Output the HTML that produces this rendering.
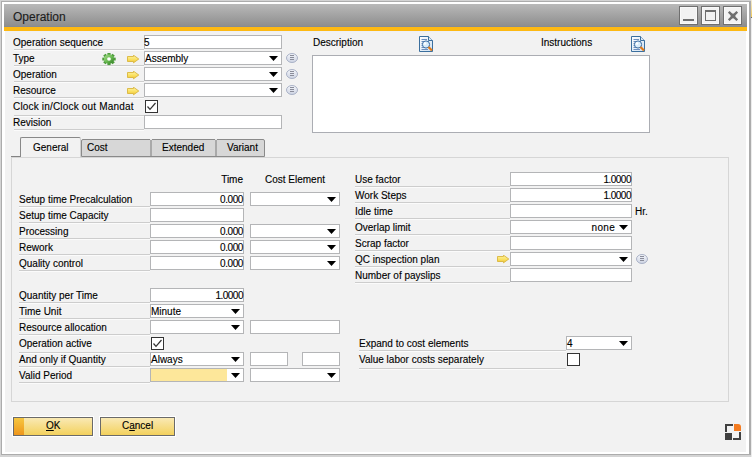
<!DOCTYPE html><html><head><meta charset="utf-8"><style>
html,body{margin:0;padding:0;width:752px;height:457px;overflow:hidden;background:#d4d4d4;}
body{position:relative;font-family:"Liberation Sans", sans-serif;}
.t{position:absolute;white-space:nowrap;line-height:12px;font-family:"Liberation Sans", sans-serif;-webkit-text-stroke:0.12px currentColor;}
</style></head><body>
<div style="position:absolute;left:1px;top:1px;width:750px;height:454px;background:#acacac"></div>
<div style="position:absolute;left:2px;top:2px;width:747px;height:452px;background:#ffffff"></div>
<div style="position:absolute;left:751px;top:0px;width:1px;height:17px;background:linear-gradient(#f4ecd6,#efc95a)"></div>
<div style="position:absolute;left:751px;top:17px;width:1px;height:1px;background:#6a6a6a"></div>
<div style="position:absolute;left:751px;top:18px;width:1px;height:439px;background:#ececec"></div>
<div style="position:absolute;left:4px;top:4px;width:743px;height:23px;background:linear-gradient(#b9b9b9,#8c8c8c)"></div>
<div style="position:absolute;left:4px;top:26px;width:743px;height:1px;background:#878b92"></div>
<div style="position:absolute;left:4px;top:27px;width:743px;height:4px;background:#fdb913"></div>
<div style="position:absolute;left:5px;top:31px;width:741px;height:421px;background:#f2f2f2"></div>
<div style="position:absolute;left:5px;top:31px;width:741px;height:1px;background:#eef0f6"></div>
<div class="t" style="left:13px;top:11px;font-size:12px;color:#1c1c1c;">Operation</div>
<div style="position:absolute;left:679px;top:6px;width:19px;height:19px;box-sizing:border-box;border:1px solid #6f6f6f;background:#f2f2f2;box-shadow:inset 0 0 0 1px #f9f9f9"></div>
<div style="position:absolute;left:701px;top:6px;width:19px;height:19px;box-sizing:border-box;border:1px solid #6f6f6f;background:#f2f2f2;box-shadow:inset 0 0 0 1px #f9f9f9"></div>
<div style="position:absolute;left:723px;top:6px;width:19px;height:19px;box-sizing:border-box;border:1px solid #6f6f6f;background:#f2f2f2;box-shadow:inset 0 0 0 1px #f9f9f9"></div>
<div style="position:absolute;left:683px;top:19px;width:11px;height:2px;background:#6f6f6f"></div>
<div style="position:absolute;left:705px;top:10px;width:11px;height:11px;box-sizing:border-box;border:1px solid #6f6f6f;border-top-width:2px"></div>
<svg style="position:absolute;left:728px;top:11px" width="10" height="10"><path d="M0.8 0.8L9.2 9.2M9.2 0.8L0.8 9.2" stroke="#6f6f6f" stroke-width="2.3"/><rect x="2.7" y="2.7" width="4.6" height="4.6" fill="#6f6f6f"/></svg>
<div class="t" style="left:13px;top:37px;font-size:10px;color:#000;">Operation sequence</div>
<div style="position:absolute;left:14px;top:49px;width:130px;height:1px;background:#cdcdcd"></div>
<div style="position:absolute;left:14px;top:50px;width:130px;height:1px;background:#fbfbfb"></div>
<div style="position:absolute;left:144px;top:35px;width:138px;height:14px;box-sizing:border-box;border:1px solid #b4b5b7;background:#fff"></div>
<div class="t" style="left:144px;top:37px;font-size:10px;color:#000;">5</div>
<div class="t" style="left:13px;top:53px;font-size:10px;color:#000;">Type</div>
<div style="position:absolute;left:14px;top:65px;width:130px;height:1px;background:#cdcdcd"></div>
<div style="position:absolute;left:14px;top:66px;width:130px;height:1px;background:#fbfbfb"></div>
<svg style="position:absolute;left:102px;top:53px" width="14" height="13"><defs><linearGradient id="gg" x1="0" y1="0" x2="1" y2="1"><stop offset="0" stop-color="#a6dc8a"/><stop offset="0.5" stop-color="#6cbc54"/><stop offset="1" stop-color="#2e7a22"/></linearGradient></defs><g transform="translate(0 0.2) scale(1 0.9)"><rect x="5.4" y="-0.2" width="3.2" height="3.2" fill="#4c9c3a" transform="rotate(0 7 6.5)"/><rect x="5.4" y="-0.2" width="3.2" height="3.2" fill="#4c9c3a" transform="rotate(45 7 6.5)"/><rect x="5.4" y="-0.2" width="3.2" height="3.2" fill="#4c9c3a" transform="rotate(90 7 6.5)"/><rect x="5.4" y="-0.2" width="3.2" height="3.2" fill="#4c9c3a" transform="rotate(135 7 6.5)"/><rect x="5.4" y="-0.2" width="3.2" height="3.2" fill="#4c9c3a" transform="rotate(180 7 6.5)"/><rect x="5.4" y="-0.2" width="3.2" height="3.2" fill="#4c9c3a" transform="rotate(225 7 6.5)"/><rect x="5.4" y="-0.2" width="3.2" height="3.2" fill="#4c9c3a" transform="rotate(270 7 6.5)"/><rect x="5.4" y="-0.2" width="3.2" height="3.2" fill="#4c9c3a" transform="rotate(315 7 6.5)"/><circle cx="7" cy="6.5" r="5.1" fill="url(#gg)"/><circle cx="7" cy="6.5" r="1.9" fill="#fff"/></g></svg>
<svg style="position:absolute;left:127px;top:55px" width="13" height="9"><defs><linearGradient id="ag12755" x1="0" y1="0" x2="0" y2="1"><stop offset="0" stop-color="#fff5a6"/><stop offset="0.6" stop-color="#f9de5c"/><stop offset="1" stop-color="#efc232"/></linearGradient></defs><path d="M0.5 1.5H6.5V0.2L11.8 4L6.5 7.8V6.5H0.5Z" fill="url(#ag12755)" stroke="#d9b63c" stroke-width="0.9"/></svg>
<div style="position:absolute;left:144px;top:51px;width:138px;height:14px;box-sizing:border-box;border:1px solid #b4b5b7;background:#fff"></div>
<svg style="position:absolute;left:269px;top:56px" width="9" height="5"><path d="M0 0H9L4.5 5Z" fill="#000"/></svg>
<div class="t" style="left:145px;top:53px;font-size:10px;color:#000;">Assembly</div>
<svg style="position:absolute;left:286px;top:53px" width="12" height="10"><defs><linearGradient id="lg28653" x1="0" y1="0" x2="0" y2="1"><stop offset="0" stop-color="#f4f6fb"/><stop offset="1" stop-color="#cdd3e2"/></linearGradient></defs><ellipse cx="6" cy="5" rx="5.5" ry="4.5" fill="url(#lg28653)" stroke="#aab2c6" stroke-width="1"/><path d="M4 2.5H8M4 4.5H8M4 6.5H8" stroke="#8a8d9a" stroke-width="1"/></svg>
<div class="t" style="left:13px;top:69px;font-size:10px;color:#000;">Operation</div>
<div style="position:absolute;left:14px;top:81px;width:130px;height:1px;background:#cdcdcd"></div>
<div style="position:absolute;left:14px;top:82px;width:130px;height:1px;background:#fbfbfb"></div>
<svg style="position:absolute;left:127px;top:71px" width="13" height="9"><defs><linearGradient id="ag12771" x1="0" y1="0" x2="0" y2="1"><stop offset="0" stop-color="#fff5a6"/><stop offset="0.6" stop-color="#f9de5c"/><stop offset="1" stop-color="#efc232"/></linearGradient></defs><path d="M0.5 1.5H6.5V0.2L11.8 4L6.5 7.8V6.5H0.5Z" fill="url(#ag12771)" stroke="#d9b63c" stroke-width="0.9"/></svg>
<div style="position:absolute;left:144px;top:67px;width:138px;height:14px;box-sizing:border-box;border:1px solid #b4b5b7;background:#fff"></div>
<svg style="position:absolute;left:269px;top:72px" width="9" height="5"><path d="M0 0H9L4.5 5Z" fill="#000"/></svg>
<svg style="position:absolute;left:286px;top:69px" width="12" height="10"><defs><linearGradient id="lg28669" x1="0" y1="0" x2="0" y2="1"><stop offset="0" stop-color="#f4f6fb"/><stop offset="1" stop-color="#cdd3e2"/></linearGradient></defs><ellipse cx="6" cy="5" rx="5.5" ry="4.5" fill="url(#lg28669)" stroke="#aab2c6" stroke-width="1"/><path d="M4 2.5H8M4 4.5H8M4 6.5H8" stroke="#8a8d9a" stroke-width="1"/></svg>
<div class="t" style="left:13px;top:85px;font-size:10px;color:#000;">Resource</div>
<div style="position:absolute;left:14px;top:97px;width:130px;height:1px;background:#cdcdcd"></div>
<div style="position:absolute;left:14px;top:98px;width:130px;height:1px;background:#fbfbfb"></div>
<svg style="position:absolute;left:127px;top:87px" width="13" height="9"><defs><linearGradient id="ag12787" x1="0" y1="0" x2="0" y2="1"><stop offset="0" stop-color="#fff5a6"/><stop offset="0.6" stop-color="#f9de5c"/><stop offset="1" stop-color="#efc232"/></linearGradient></defs><path d="M0.5 1.5H6.5V0.2L11.8 4L6.5 7.8V6.5H0.5Z" fill="url(#ag12787)" stroke="#d9b63c" stroke-width="0.9"/></svg>
<div style="position:absolute;left:144px;top:83px;width:138px;height:14px;box-sizing:border-box;border:1px solid #b4b5b7;background:#fff"></div>
<svg style="position:absolute;left:269px;top:88px" width="9" height="5"><path d="M0 0H9L4.5 5Z" fill="#000"/></svg>
<svg style="position:absolute;left:286px;top:85px" width="12" height="10"><defs><linearGradient id="lg28685" x1="0" y1="0" x2="0" y2="1"><stop offset="0" stop-color="#f4f6fb"/><stop offset="1" stop-color="#cdd3e2"/></linearGradient></defs><ellipse cx="6" cy="5" rx="5.5" ry="4.5" fill="url(#lg28685)" stroke="#aab2c6" stroke-width="1"/><path d="M4 2.5H8M4 4.5H8M4 6.5H8" stroke="#8a8d9a" stroke-width="1"/></svg>
<div class="t" style="left:13px;top:101px;font-size:10px;color:#000;"><span style="display:inline-block;width:121px;overflow:hidden;letter-spacing:0.18px;vertical-align:top">Clock in/Clock out Mandat</span></div>
<div style="position:absolute;left:14px;top:115px;width:130px;height:1px;background:#cdcdcd"></div>
<div style="position:absolute;left:14px;top:116px;width:130px;height:1px;background:#fbfbfb"></div>
<div style="position:absolute;left:145px;top:100px;width:13px;height:13px;box-sizing:border-box;border:1px solid #333;background:#fff"></div>
<svg style="position:absolute;left:145px;top:100px" width="13" height="13"><path d="M2.5 6.5L5 9.3L10.5 3" fill="none" stroke="#333" stroke-width="1.25"/></svg>
<div class="t" style="left:13px;top:117px;font-size:10px;color:#000;">Revision</div>
<div style="position:absolute;left:14px;top:129px;width:130px;height:1px;background:#cdcdcd"></div>
<div style="position:absolute;left:14px;top:130px;width:130px;height:1px;background:#fbfbfb"></div>
<div style="position:absolute;left:144px;top:115px;width:138px;height:14px;box-sizing:border-box;border:1px solid #b4b5b7;background:#fff"></div>
<div class="t" style="left:313px;top:37px;font-size:10px;color:#000;">Description</div>
<svg style="position:absolute;left:419px;top:36px" width="15" height="17">
<defs><linearGradient id="dg419" x1="0" y1="0" x2="1" y2="1"><stop offset="0" stop-color="#ffffff"/><stop offset="1" stop-color="#cfe0f0"/></linearGradient></defs>
<path d="M0.5 0.5H9.5L13.5 4.5V15.5H0.5Z" fill="url(#dg419)" stroke="#3b6f9e" stroke-width="1"/>
<path d="M9.5 0.5V4.5H13.5" fill="#dbe8f4" stroke="#3b6f9e" stroke-width="1"/>
<path d="M2.5 3.5H8M2.5 5.5H10M2.5 7.5H11M2.5 9.5H11M2.5 11.5H11M2.5 13.5H9" stroke="#6d8fbf" stroke-width="1"/>
<circle cx="7" cy="8.5" r="3.6" fill="#d8ecfa" stroke="#3f6fa3" stroke-width="1"/>
<circle cx="6" cy="7.5" r="1.2" fill="#fff"/>
<path d="M9.5 11L13 14.5" stroke="#e07a18" stroke-width="2.2"/>
</svg>
<div class="t" style="left:541px;top:37px;font-size:10px;color:#000;">Instructions</div>
<svg style="position:absolute;left:631px;top:36px" width="15" height="17">
<defs><linearGradient id="dg631" x1="0" y1="0" x2="1" y2="1"><stop offset="0" stop-color="#ffffff"/><stop offset="1" stop-color="#cfe0f0"/></linearGradient></defs>
<path d="M0.5 0.5H9.5L13.5 4.5V15.5H0.5Z" fill="url(#dg631)" stroke="#3b6f9e" stroke-width="1"/>
<path d="M9.5 0.5V4.5H13.5" fill="#dbe8f4" stroke="#3b6f9e" stroke-width="1"/>
<path d="M2.5 3.5H8M2.5 5.5H10M2.5 7.5H11M2.5 9.5H11M2.5 11.5H11M2.5 13.5H9" stroke="#6d8fbf" stroke-width="1"/>
<circle cx="7" cy="8.5" r="3.6" fill="#d8ecfa" stroke="#3f6fa3" stroke-width="1"/>
<circle cx="6" cy="7.5" r="1.2" fill="#fff"/>
<path d="M9.5 11L13 14.5" stroke="#e07a18" stroke-width="2.2"/>
</svg>
<div style="position:absolute;left:312px;top:55px;width:338px;height:78px;box-sizing:border-box;border:1px solid #abadb3;background:#fff"></div>
<div style="position:absolute;left:11px;top:157px;width:718px;height:245px;box-sizing:border-box;border:1px solid #d6d6d6"></div>
<div style="position:absolute;left:11px;top:156px;width:10px;height:1px;background:#838383"></div>
<div style="position:absolute;left:81px;top:139px;width:184px;height:18px;box-sizing:border-box;border:1px solid #8a8a8a;border-radius:2px 2px 0 0;background:#d7d7d7"></div>
<div style="position:absolute;left:150px;top:140px;width:2px;height:16px;background:#a9a9a9"></div>
<div style="position:absolute;left:215px;top:140px;width:2px;height:16px;background:#a9a9a9"></div>
<div style="position:absolute;left:150px;top:139px;width:2px;height:1px;background:#e6e6e6"></div>
<div style="position:absolute;left:215px;top:139px;width:2px;height:1px;background:#e6e6e6"></div>
<div class="t" style="left:87px;top:142px;font-size:10px;color:#000;">Cost</div>
<div class="t" style="left:162px;top:142px;font-size:10px;color:#000;">Extended</div>
<div class="t" style="left:227px;top:142px;font-size:10px;color:#000;">Variant</div>
<div style="position:absolute;left:20px;top:137px;width:61px;height:20px;box-sizing:border-box;border:1px solid #888;border-right-color:#cfcfcf;border-bottom:none;border-radius:2px 2px 0 0;background:#f2f2f2"></div>
<div class="t" style="left:33px;top:142px;font-size:10px;color:#000;">General</div>
<div class="t" style="right:509px;top:174px;font-size:10px;color:#000;text-align:right;">Time</div>
<div class="t" style="left:265px;top:174px;font-size:10px;color:#000;">Cost Element</div>
<div class="t" style="left:19px;top:194px;font-size:10px;color:#000;">Setup time Precalculation</div>
<div style="position:absolute;left:19px;top:206px;width:131px;height:1px;background:#cdcdcd"></div>
<div style="position:absolute;left:19px;top:207px;width:131px;height:1px;background:#fbfbfb"></div>
<div style="position:absolute;left:150px;top:192px;width:94px;height:14px;box-sizing:border-box;border:1px solid #b4b5b7;background:#fff"></div>
<div class="t" style="right:509px;top:194px;font-size:10px;color:#000;text-align:right;letter-spacing:-0.4px">0.000</div>
<div style="position:absolute;left:250px;top:192px;width:90px;height:14px;box-sizing:border-box;border:1px solid #b4b5b7;background:#fff"></div>
<svg style="position:absolute;left:327px;top:197px" width="9" height="5"><path d="M0 0H9L4.5 5Z" fill="#000"/></svg>
<div class="t" style="left:19px;top:210px;font-size:10px;color:#000;">Setup time Capacity</div>
<div style="position:absolute;left:19px;top:222px;width:131px;height:1px;background:#cdcdcd"></div>
<div style="position:absolute;left:19px;top:223px;width:131px;height:1px;background:#fbfbfb"></div>
<div style="position:absolute;left:150px;top:208px;width:94px;height:14px;box-sizing:border-box;border:1px solid #b4b5b7;background:#fff"></div>
<div class="t" style="left:19px;top:226px;font-size:10px;color:#000;">Processing</div>
<div style="position:absolute;left:19px;top:238px;width:131px;height:1px;background:#cdcdcd"></div>
<div style="position:absolute;left:19px;top:239px;width:131px;height:1px;background:#fbfbfb"></div>
<div style="position:absolute;left:150px;top:224px;width:94px;height:14px;box-sizing:border-box;border:1px solid #b4b5b7;background:#fff"></div>
<div class="t" style="right:509px;top:226px;font-size:10px;color:#000;text-align:right;letter-spacing:-0.4px">0.000</div>
<div style="position:absolute;left:250px;top:224px;width:90px;height:14px;box-sizing:border-box;border:1px solid #b4b5b7;background:#fff"></div>
<svg style="position:absolute;left:327px;top:229px" width="9" height="5"><path d="M0 0H9L4.5 5Z" fill="#000"/></svg>
<div class="t" style="left:19px;top:242px;font-size:10px;color:#000;">Rework</div>
<div style="position:absolute;left:19px;top:254px;width:131px;height:1px;background:#cdcdcd"></div>
<div style="position:absolute;left:19px;top:255px;width:131px;height:1px;background:#fbfbfb"></div>
<div style="position:absolute;left:150px;top:240px;width:94px;height:14px;box-sizing:border-box;border:1px solid #b4b5b7;background:#fff"></div>
<div class="t" style="right:509px;top:242px;font-size:10px;color:#000;text-align:right;letter-spacing:-0.4px">0.000</div>
<div style="position:absolute;left:250px;top:240px;width:90px;height:14px;box-sizing:border-box;border:1px solid #b4b5b7;background:#fff"></div>
<svg style="position:absolute;left:327px;top:245px" width="9" height="5"><path d="M0 0H9L4.5 5Z" fill="#000"/></svg>
<div class="t" style="left:19px;top:258px;font-size:10px;color:#000;">Quality control</div>
<div style="position:absolute;left:19px;top:270px;width:131px;height:1px;background:#cdcdcd"></div>
<div style="position:absolute;left:19px;top:271px;width:131px;height:1px;background:#fbfbfb"></div>
<div style="position:absolute;left:150px;top:256px;width:94px;height:14px;box-sizing:border-box;border:1px solid #b4b5b7;background:#fff"></div>
<div class="t" style="right:509px;top:258px;font-size:10px;color:#000;text-align:right;letter-spacing:-0.4px">0.000</div>
<div style="position:absolute;left:250px;top:256px;width:90px;height:14px;box-sizing:border-box;border:1px solid #b4b5b7;background:#fff"></div>
<svg style="position:absolute;left:327px;top:261px" width="9" height="5"><path d="M0 0H9L4.5 5Z" fill="#000"/></svg>
<div class="t" style="left:19px;top:290px;font-size:10px;color:#000;">Quantity per Time</div>
<div style="position:absolute;left:19px;top:302px;width:131px;height:1px;background:#cdcdcd"></div>
<div style="position:absolute;left:19px;top:303px;width:131px;height:1px;background:#fbfbfb"></div>
<div style="position:absolute;left:150px;top:288px;width:94px;height:14px;box-sizing:border-box;border:1px solid #b4b5b7;background:#fff"></div>
<div class="t" style="right:509px;top:290px;font-size:10px;color:#000;text-align:right;letter-spacing:-0.5px">1.0000</div>
<div class="t" style="left:19px;top:306px;font-size:10px;color:#000;">Time Unit</div>
<div style="position:absolute;left:19px;top:318px;width:131px;height:1px;background:#cdcdcd"></div>
<div style="position:absolute;left:19px;top:319px;width:131px;height:1px;background:#fbfbfb"></div>
<div style="position:absolute;left:150px;top:304px;width:94px;height:14px;box-sizing:border-box;border:1px solid #b4b5b7;background:#fff"></div>
<svg style="position:absolute;left:231px;top:309px" width="9" height="5"><path d="M0 0H9L4.5 5Z" fill="#000"/></svg>
<div class="t" style="left:151px;top:306px;font-size:10px;color:#000;">Minute</div>
<div class="t" style="left:19px;top:322px;font-size:10px;color:#000;">Resource allocation</div>
<div style="position:absolute;left:19px;top:334px;width:131px;height:1px;background:#cdcdcd"></div>
<div style="position:absolute;left:19px;top:335px;width:131px;height:1px;background:#fbfbfb"></div>
<div style="position:absolute;left:150px;top:320px;width:94px;height:14px;box-sizing:border-box;border:1px solid #b4b5b7;background:#fff"></div>
<svg style="position:absolute;left:231px;top:325px" width="9" height="5"><path d="M0 0H9L4.5 5Z" fill="#000"/></svg>
<div style="position:absolute;left:250px;top:320px;width:90px;height:14px;box-sizing:border-box;border:1px solid #b4b5b7;background:#fff"></div>
<div class="t" style="left:19px;top:338px;font-size:10px;color:#000;">Operation active</div>
<div style="position:absolute;left:19px;top:352px;width:131px;height:1px;background:#cdcdcd"></div>
<div style="position:absolute;left:19px;top:353px;width:131px;height:1px;background:#fbfbfb"></div>
<div style="position:absolute;left:151px;top:337px;width:13px;height:13px;box-sizing:border-box;border:1px solid #333;background:#fff"></div>
<svg style="position:absolute;left:151px;top:337px" width="13" height="13"><path d="M2.5 6.5L5 9.3L10.5 3" fill="none" stroke="#333" stroke-width="1.25"/></svg>
<div class="t" style="left:19px;top:354px;font-size:10px;color:#000;">And only if Quantity</div>
<div style="position:absolute;left:19px;top:366px;width:131px;height:1px;background:#cdcdcd"></div>
<div style="position:absolute;left:19px;top:367px;width:131px;height:1px;background:#fbfbfb"></div>
<div style="position:absolute;left:150px;top:352px;width:94px;height:14px;box-sizing:border-box;border:1px solid #b4b5b7;background:#fff"></div>
<svg style="position:absolute;left:231px;top:357px" width="9" height="5"><path d="M0 0H9L4.5 5Z" fill="#000"/></svg>
<div class="t" style="left:151px;top:354px;font-size:10px;color:#000;">Always</div>
<div style="position:absolute;left:250px;top:352px;width:38px;height:14px;box-sizing:border-box;border:1px solid #b4b5b7;background:#fff"></div>
<div style="position:absolute;left:302px;top:352px;width:38px;height:14px;box-sizing:border-box;border:1px solid #b4b5b7;background:#fff"></div>
<div class="t" style="left:19px;top:370px;font-size:10px;color:#000;">Valid Period</div>
<div style="position:absolute;left:19px;top:382px;width:131px;height:1px;background:#cdcdcd"></div>
<div style="position:absolute;left:19px;top:383px;width:131px;height:1px;background:#fbfbfb"></div>
<div style="position:absolute;left:150px;top:368px;width:94px;height:14px;box-sizing:border-box;border:1px solid #b4b5b7;background:#fff"></div>
<div style="position:absolute;left:151px;top:369px;width:76px;height:12px;background:#fde79a"></div>
<svg style="position:absolute;left:231px;top:373px" width="9" height="5"><path d="M0 0H9L4.5 5Z" fill="#000"/></svg>
<div style="position:absolute;left:250px;top:368px;width:90px;height:14px;box-sizing:border-box;border:1px solid #b4b5b7;background:#fff"></div>
<svg style="position:absolute;left:327px;top:373px" width="9" height="5"><path d="M0 0H9L4.5 5Z" fill="#000"/></svg>
<div class="t" style="left:355px;top:174px;font-size:10px;color:#000;">Use factor</div>
<div style="position:absolute;left:355px;top:186px;width:155px;height:1px;background:#cdcdcd"></div>
<div style="position:absolute;left:355px;top:187px;width:155px;height:1px;background:#fbfbfb"></div>
<div class="t" style="left:355px;top:190px;font-size:10px;color:#000;">Work Steps</div>
<div style="position:absolute;left:355px;top:202px;width:155px;height:1px;background:#cdcdcd"></div>
<div style="position:absolute;left:355px;top:203px;width:155px;height:1px;background:#fbfbfb"></div>
<div class="t" style="left:355px;top:206px;font-size:10px;color:#000;">Idle time</div>
<div style="position:absolute;left:355px;top:218px;width:155px;height:1px;background:#cdcdcd"></div>
<div style="position:absolute;left:355px;top:219px;width:155px;height:1px;background:#fbfbfb"></div>
<div class="t" style="left:355px;top:222px;font-size:10px;color:#000;">Overlap limit</div>
<div style="position:absolute;left:355px;top:234px;width:155px;height:1px;background:#cdcdcd"></div>
<div style="position:absolute;left:355px;top:235px;width:155px;height:1px;background:#fbfbfb"></div>
<div class="t" style="left:355px;top:238px;font-size:10px;color:#000;">Scrap factor</div>
<div style="position:absolute;left:355px;top:250px;width:155px;height:1px;background:#cdcdcd"></div>
<div style="position:absolute;left:355px;top:251px;width:155px;height:1px;background:#fbfbfb"></div>
<div class="t" style="left:355px;top:254px;font-size:10px;color:#000;">QC inspection plan</div>
<div style="position:absolute;left:355px;top:266px;width:155px;height:1px;background:#cdcdcd"></div>
<div style="position:absolute;left:355px;top:267px;width:155px;height:1px;background:#fbfbfb"></div>
<div class="t" style="left:355px;top:270px;font-size:10px;color:#000;">Number of payslips</div>
<div style="position:absolute;left:355px;top:282px;width:155px;height:1px;background:#cdcdcd"></div>
<div style="position:absolute;left:355px;top:283px;width:155px;height:1px;background:#fbfbfb"></div>
<div style="position:absolute;left:510px;top:172px;width:122px;height:14px;box-sizing:border-box;border:1px solid #b4b5b7;background:#fff"></div>
<div class="t" style="right:121px;top:174px;font-size:10px;color:#000;text-align:right;letter-spacing:-0.5px">1.0000</div>
<div style="position:absolute;left:510px;top:188px;width:122px;height:14px;box-sizing:border-box;border:1px solid #b4b5b7;background:#fff"></div>
<div class="t" style="right:121px;top:190px;font-size:10px;color:#000;text-align:right;letter-spacing:-0.5px">1.0000</div>
<div style="position:absolute;left:510px;top:204px;width:122px;height:14px;box-sizing:border-box;border:1px solid #b4b5b7;background:#fff"></div>
<div class="t" style="left:635px;top:206px;font-size:10px;color:#000;">Hr.</div>
<div style="position:absolute;left:510px;top:220px;width:122px;height:14px;box-sizing:border-box;border:1px solid #b4b5b7;background:#fff"></div>
<div class="t" style="right:137px;top:222px;font-size:10px;color:#000;text-align:right;letter-spacing:0.3px">none</div>
<svg style="position:absolute;left:619px;top:225px" width="9" height="5"><path d="M0 0H9L4.5 5Z" fill="#000"/></svg>
<div style="position:absolute;left:510px;top:236px;width:122px;height:14px;box-sizing:border-box;border:1px solid #b4b5b7;background:#fff"></div>
<svg style="position:absolute;left:497px;top:255px" width="13" height="9"><defs><linearGradient id="ag497255" x1="0" y1="0" x2="0" y2="1"><stop offset="0" stop-color="#fff5a6"/><stop offset="0.6" stop-color="#f9de5c"/><stop offset="1" stop-color="#efc232"/></linearGradient></defs><path d="M0.5 1.5H6.5V0.2L11.8 4L6.5 7.8V6.5H0.5Z" fill="url(#ag497255)" stroke="#d9b63c" stroke-width="0.9"/></svg>
<div style="position:absolute;left:510px;top:252px;width:122px;height:14px;box-sizing:border-box;border:1px solid #b4b5b7;background:#fff"></div>
<svg style="position:absolute;left:619px;top:257px" width="9" height="5"><path d="M0 0H9L4.5 5Z" fill="#000"/></svg>
<svg style="position:absolute;left:636px;top:254px" width="12" height="10"><defs><linearGradient id="lg636254" x1="0" y1="0" x2="0" y2="1"><stop offset="0" stop-color="#f4f6fb"/><stop offset="1" stop-color="#cdd3e2"/></linearGradient></defs><ellipse cx="6" cy="5" rx="5.5" ry="4.5" fill="url(#lg636254)" stroke="#aab2c6" stroke-width="1"/><path d="M4 2.5H8M4 4.5H8M4 6.5H8" stroke="#8a8d9a" stroke-width="1"/></svg>
<div style="position:absolute;left:510px;top:268px;width:122px;height:14px;box-sizing:border-box;border:1px solid #b4b5b7;background:#fff"></div>
<div class="t" style="left:359px;top:338px;font-size:10px;color:#000;">Expand to cost elements</div>
<div style="position:absolute;left:359px;top:350px;width:207px;height:1px;background:#cdcdcd"></div>
<div style="position:absolute;left:359px;top:351px;width:207px;height:1px;background:#fbfbfb"></div>
<div style="position:absolute;left:566px;top:336px;width:66px;height:14px;box-sizing:border-box;border:1px solid #b4b5b7;background:#fff"></div>
<svg style="position:absolute;left:619px;top:341px" width="9" height="5"><path d="M0 0H9L4.5 5Z" fill="#000"/></svg>
<div class="t" style="left:567px;top:338px;font-size:10px;color:#000;">4</div>
<div class="t" style="left:359px;top:354px;font-size:10px;color:#000;">Value labor costs separately</div>
<div style="position:absolute;left:359px;top:368px;width:207px;height:1px;background:#cdcdcd"></div>
<div style="position:absolute;left:359px;top:369px;width:207px;height:1px;background:#fbfbfb"></div>
<div style="position:absolute;left:567px;top:353px;width:13px;height:13px;box-sizing:border-box;border:1px solid #333;background:#fff"></div>
<div style="position:absolute;left:12px;top:416px;width:82px;height:21px;background:#fff"></div>
<div style="position:absolute;left:13px;top:417px;width:80px;height:19px;box-sizing:border-box;border:1px solid #6a6a6a;background:linear-gradient(#f9e9b4,#f3d15d)"></div>
<div style="position:absolute;left:14px;top:418px;width:10px;height:17px;background:linear-gradient(#f6c740,#ef961c)"></div>
<div class="t" style="left:46px;top:420px;font-size:10px;color:#000;"><u>O</u>K</div>
<div style="position:absolute;left:99px;top:416px;width:77px;height:21px;background:#fff"></div>
<div style="position:absolute;left:100px;top:417px;width:75px;height:19px;box-sizing:border-box;border:1px solid #6a6a6a;background:linear-gradient(#f9e9b4,#f3d15d)"></div>
<div class="t" style="left:122px;top:420px;font-size:10px;color:#000;">C<u>a</u>ncel</div>
<svg style="position:absolute;left:725px;top:424px" width="16" height="16">
<path d="M0 0H8V2H2V8H0Z" fill="#404040"/>
<path d="M9 0H13A3 3 0 0 1 16 3V7H9Z" fill="#f47b20"/>
<rect x="0" y="9" width="7" height="7" fill="#404040"/>
<path d="M14 8H16V16H8V14H14Z" fill="#404040"/>
</svg>
</body></html>
